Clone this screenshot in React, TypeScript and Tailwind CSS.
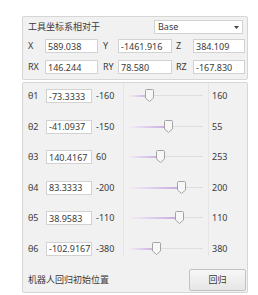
import React from 'react'

interface JOINT {
  name: string
  value: number
  min: number
  max: number
}

const joints: JOINT[] = [
  { name: 'θ1', value: -73.3333, min: -160, max: 160 },
  { name: 'θ2', value: -41.0937, min: -150, max: 55 },
  { name: 'θ3', value: 140.4167, min: 60, max: 253 },
  { name: 'θ4', value: 83.3333, min: -200, max: 200 },
  { name: 'θ5', value: 38.9583, min: -110, max: 110 },
  { name: 'θ6', value: -102.9167, min: -380, max: 380 },
]

const font = { fontFamily: '"Noto Sans", "Noto Sans CJK SC", sans-serif' }

function Field({ value, className }: { value: string; className: string }) {
  return (
    <div className={`${className} h-[14px] bg-white border border-[#d2d2d2] flex items-center pl-[2px] leading-none`}>
      {value}
    </div>
  )
}

function Slider({ value, min, max }: { value: number; min: number; max: number }) {
  const pos = ((value - min) / (max - min)) * 74
  return (
    <div className="relative h-[14px] w-[74px]">
      {/* track */}
      <div className="absolute left-0 right-0 top-[6px] h-px bg-[#dedede]" />
      <div
        className="absolute left-0 top-[6px] h-[2px] bg-gradient-to-r from-[#f2edf6] to-[#c6a9de]"
        style={{ width: pos }}
      />
      {/* handle */}
      <svg
        className="absolute top-[0px]"
        style={{ left: pos - 4 }}
        width="9"
        height="13"
        viewBox="0 0 9 13"
      >
        <path d="M0.5 1.5 Q0.5 0.5 1.5 0.5 L7.5 0.5 Q8.5 0.5 8.5 1.5 L8.5 9 L4.5 12.5 L0.5 9 Z" fill="#f7f7f7" stroke="#a3a3a3" strokeWidth="1" />
      </svg>
    </div>
  )
}

export default function App() {
  return (
    <div className="w-[258px] h-[295px] bg-white pl-[22px] pt-[16px] text-[9px] text-[#3a3a3a]" style={font}>
      {/* tool coordinate group */}
      <div className="w-[226px] h-[64px] bg-[#f1f1f1] border border-[#d6d6d6] rounded-[2px] pl-[5px] pt-[3px]">
        <div className="flex items-center h-[14px]">
          <span className="w-[126px]">工具坐标系相对于</span>
          <div className="w-[89px] h-[14px] bg-white border border-[#d2d2d2] flex items-center justify-between pl-[3px] pr-[3px]">
            <span>Base</span>
            <svg width="5" height="3" viewBox="0 0 5 3">
              <path d="M0 0 L5 0 L2.5 3 Z" fill="#444" />
            </svg>
          </div>
        </div>
        <div className="flex items-center h-[14px] mt-[5px]">
          <span className="w-[17px]">X</span>
          <Field className="w-[53px]" value="589.038" />
          <span className="w-[20px] pl-[5px]">Y</span>
          <Field className="w-[54px]" value="-1461.916" />
          <span className="w-[21px] pl-[4px]">Z</span>
          <Field className="w-[52px]" value="384.109" />
        </div>
        <div className="flex items-center h-[14px] mt-[7px]">
          <span className="w-[17px]">RX</span>
          <Field className="w-[53px]" value="146.244" />
          <span className="w-[20px] pl-[5px]">RY</span>
          <Field className="w-[54px]" value="78.580" />
          <span className="w-[21px] pl-[4px]">RZ</span>
          <Field className="w-[52px]" value="-167.830" />
        </div>
      </div>

      {/* joint group */}
      <div className="w-[226px] h-[211px] mt-[2px] bg-[#f1f1f1] border border-[#d6d6d6] rounded-[2px] pl-[5px]">
        {joints.map((j, i) => (
          <div key={j.name} className={`flex ${i === 5 ? 'h-[20px]' : 'h-[30.6px]'}`}>
            <span className="w-[18px] pt-[8px] leading-none">{j.name}</span>
            <div className="pt-[6px]">
              <Field className="w-[46px]" value={String(j.value)} />
            </div>
            <span className="w-[31px] pl-[4px] pt-[8px] leading-none">{j.min}</span>
            <div className="w-[86px] border-l border-r border-[#e6e6e6] pl-[5px] pt-[6px]">
              <Slider value={j.value} min={j.min} max={j.max} />
            </div>
            <span className="pl-[3px] pt-[8px] leading-none">{j.max}</span>
          </div>
        ))}
        <div className="flex items-center justify-between mt-[13px] pr-[1px]">
          <span>机器人回归初始位置</span>
          <button className="w-[57px] h-[22px] bg-gradient-to-b from-[#f7f7f7] to-[#e6e6e6] border border-[#c2c2c2] rounded-[2px] text-[9px] text-[#3a3a3a]">
            回归
          </button>
        </div>
      </div>
    </div>
  )
}
